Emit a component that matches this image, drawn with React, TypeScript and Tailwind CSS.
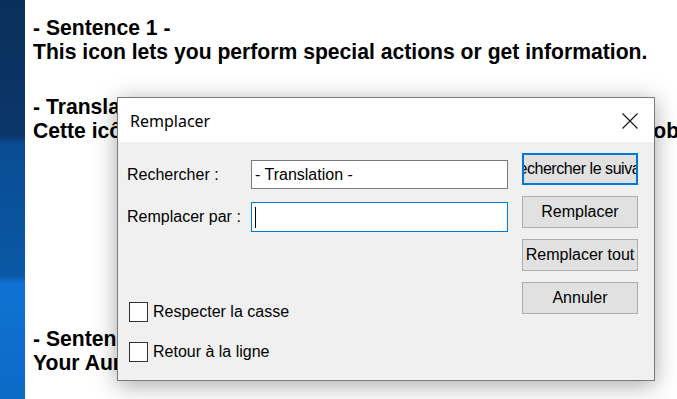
const sans = { fontFamily: '"Liberation Sans", Arial, sans-serif' };

const Button = ({ label, focused = false }: { label: string; focused?: boolean }) => (
  <div
    className={`w-[116px] h-[32px] flex items-center justify-center overflow-hidden whitespace-nowrap bg-[#e1e1e1] text-[16px] text-black ${
      focused ? "border-2 border-[#0078d7] tracking-[-0.45px]" : "border border-[#adadad]"
    }`}
  >
    <span>{label}</span>
  </div>
);

const Checkbox = ({ label }: { label: string }) => (
  <div className="flex items-center h-[20px]">
    <div className="w-[19px] h-[20px] border border-[#333333] bg-white" />
    <span className="ml-[5px] text-[16px] text-black">{label}</span>
  </div>
);

const ReplaceDialog = () => (
  <div
    className="absolute left-[117px] top-[97px] w-[538px] h-[284px] border border-[#7a7a7a] bg-[#f0f0f0] flex flex-col shadow-[0_4px_22px_rgba(0,0,0,0.35)]"
    style={sans}
  >
    <div className="h-[44px] bg-white flex items-center justify-between pl-[12px] pr-[16px]">
      <span className="text-[16px] text-black mt-[1px]" style={{ fontFamily: '"Noto Sans", "Open Sans", sans-serif' }}>
        Remplacer
      </span>
      <svg width="16" height="16" viewBox="0 0 16 16" className="mt-[2px]">
        <path d="M0.5 0.5 L15.5 15.5 M15.5 0.5 L0.5 15.5" stroke="#111" strokeWidth="1.1" />
      </svg>
    </div>

    <div className="flex-1 flex">
      <div className="flex-1 pl-[9px] pt-[18px] flex flex-col">
        <div className="flex items-center h-[29px]">
          <span className="w-[124px] text-[16px] text-black">Rechercher :</span>
          <div className="w-[257px] h-[29px] border border-[#7a7a7a] bg-white flex items-center pl-[3px] text-[16px] text-black">
            - Translation -
          </div>
        </div>
        <div className="flex items-center h-[30px] mt-[13px]">
          <span className="w-[124px] text-[16px] text-black">Remplacer par :</span>
          <div className="w-[257px] h-[30px] border border-[#0078d7] bg-white flex items-center pl-[3px]">
            <div className="w-px h-[21px] bg-black" />
          </div>
        </div>
        <div className="mt-[70px] ml-[2px] flex flex-col gap-[20px]">
          <Checkbox label="Respecter la casse" />
          <Checkbox label="Retour à la ligne" />
        </div>
      </div>

      <div className="pt-[11px] pr-[16px] flex flex-col gap-[11px]">
        <Button label="Rechercher le suivant" focused />
        <Button label="Remplacer" />
        <Button label="Remplacer tout" />
        <Button label="Annuler" />
      </div>
    </div>
  </div>
);

export default function App() {
  return (
    <div className="relative w-[677px] h-[399px] overflow-hidden flex bg-white">
      <div className="w-[25px] shrink-0 bg-[linear-gradient(to_bottom,#0a2f5c_0%,#0b3769_34%,#0a4c92_36%,#0a58a6_69%,#0f72d2_71%,#0c6ac6_100%)]" />
      <div
        className="flex-1 pl-[8px] pt-[16px] text-[21.15px] leading-[24px] font-bold text-black whitespace-nowrap"
        style={sans}
      >
        <p>- Sentence 1 -</p>
        <p>This icon lets you perform special actions or get information.</p>
        <p className="mt-[31px]">- Translation -</p>
        <p>Cette icône vous permet d’effectuer des actions spéciales ou obtenir des informations.</p>
        <p className="mt-[184px]">- Sentence 2 -</p>
        <p>Your Aura level increases as you play.</p>
      </div>
      <ReplaceDialog />
    </div>
  );
}
